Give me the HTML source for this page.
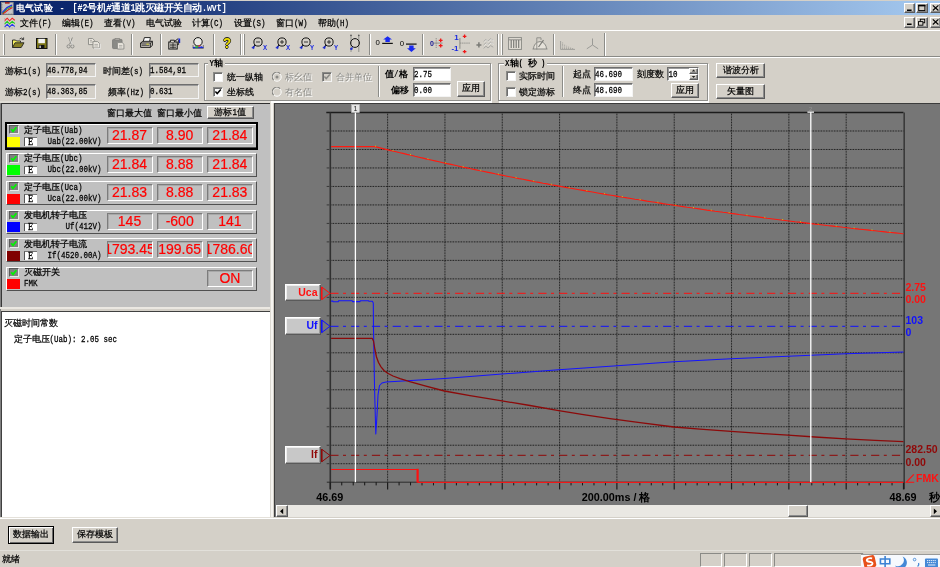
<!DOCTYPE html>
<html><head><meta charset="utf-8"><title>UI</title><style>
*{box-sizing:border-box;margin:0;padding:0}
html,body{width:940px;height:567px;overflow:hidden;background:#d4d0c8}
body{position:relative;font-family:"Liberation Sans",sans-serif;font-size:9px;color:#000;line-height:1}
#root{position:absolute;left:0;top:0;width:940px;height:567px;overflow:hidden;will-change:transform}
.a{position:absolute}
.t{position:absolute;white-space:nowrap;-webkit-text-stroke-width:0.22px;font-size:9px;line-height:12px;height:12px}
.m{font-family:"Liberation Mono",monospace;font-size:7.5px;letter-spacing:0px;display:inline-block;transform:scaleY(1.28);transform-origin:50% 62%}
.t.m{display:block}
.b{font-weight:bold;-webkit-text-stroke-width:0 !important}
i{display:inline-block;width:1em;font-style:normal;text-align:center}
.g{-webkit-text-stroke-width:0;color:#8a8a86;text-shadow:0.7px 0.7px 0 #fff}
.sunk{position:absolute;border:1px solid;border-color:#808080 #fff #fff #808080;}
.sunk2{position:absolute;border:1px solid;border-color:#6e6e6e #f4f4f4 #f4f4f4 #6e6e6e;box-shadow:inset 1px 1px 0 #9a9a9a}
.btn{-webkit-text-stroke-width:0.22px;position:absolute;border:1px solid;border-color:#fff #5a5a5a #5a5a5a #fff;background:#d4d0c8;box-shadow:inset -1px -1px 0 #8c8c8c;text-align:center;font-size:9px;white-space:nowrap}
.grp{position:absolute;border:1px solid #8f8f8c;box-shadow:1px 1px 0 #fff, inset 1px 1px 0 #fff}
.cb{position:absolute;width:10px;height:10px;background:#fff;border:1px solid;border-color:#8a8a86 #f4f4f4 #f4f4f4 #8a8a86;box-shadow:inset 1px 1px 0 #6e6e6e}
.val{position:absolute;width:46px;height:17px;border:1px solid;border-color:#7c7c7c #fff #fff #7c7c7c;box-shadow:inset 1px 1px 0 #a8a8a8;color:#f00;-webkit-text-stroke:0.2px #f00;font-size:14px;line-height:15px;display:flex;justify-content:center;overflow:hidden;white-space:nowrap}
.row{position:absolute;left:6px;width:251px;height:24px;border:1px solid;border-color:#fff #505050 #505050 #fff;background:#c0c0c0}
.vsep{position:absolute;width:2px;border-left:1px solid #8c8c88;border-right:1px solid #fff}
</style></head><body>
<div id="root">
<div class="a" style="left:0;top:1px;width:940px;height:14px;background:linear-gradient(90deg,#0a246a 0%,#0c276d 8%,#a6caf0 100%)"></div>
<svg class="a" style="left:1.4px;top:1.8px" width="12.6" height="12.8" viewBox="0 0 12.6 12.8"><rect x="0.4" y="0.4" width="11.8" height="12" fill="#c4c4c4" stroke="#8a8a8a" stroke-width="0.8"/><rect x="4" y="0.2" width="4.6" height="1.4" fill="#a01010"/><path d="M1.2 10.6 L6 5.6 L11 3.2" stroke="#2030e0" stroke-width="1.3" fill="none"/><path d="M1.4 11.6 L6.4 6.8 L11.2 4.4" stroke="#20b020" stroke-width="1" fill="none"/><path d="M1.8 12 L7 8 L11.4 5.4" stroke="#e02020" stroke-width="1.2" fill="none"/><path d="M1 2 V12 H12" stroke="#555" stroke-width="0.6" stroke-dasharray="0.8 0.8" fill="none"/></svg>
<div class="t b" style="left:15.5px;top:2px;color:#fff;font-size:9.4px"><i>电</i><i>气</i><i>试</i><i>验</i></div>
<div class="t b" style="left:60.5px;top:2px;color:#fff;font-size:9.4px">-</div>
<div class="t b" style="left:72.5px;top:2px;color:#fff;font-size:9.5px"><span class="m b" style="font-size:8.3px">[#2</span><i>号</i><i>机</i><span class="m b" style="font-size:8.3px">#</span><i>通</i><i>道</i><span class="m b" style="font-size:8.3px">1</span><i>跳</i><i>灭</i><i>磁</i><i>开</i><i>关</i><i>自</i><i>动</i><span class="m b" style="font-size:8.3px">.wvt]</span></div>
<div class="btn" style="left:904px;top:3px;width:11px;height:10.3px"></div><svg class="a" style="left:904px;top:3px" width="11" height="10.3" viewBox="0 0 11 10.3"><rect x="3" y="6.5" width="4.6" height="1.5" fill="#000"/></svg>
<div class="btn" style="left:916px;top:3px;width:11.8px;height:10.3px"></div><svg class="a" style="left:916px;top:3px" width="11.8" height="10.3" viewBox="0 0 11.8 10.3"><rect x="2.7" y="2.3" width="6.2" height="5.3" fill="none" stroke="#000" stroke-width="1"/><rect x="2.2" y="1.8" width="7.2" height="1.6" fill="#000"/></svg>
<div class="btn" style="left:930px;top:3px;width:11px;height:10.3px"></div><svg class="a" style="left:930px;top:3px" width="11" height="10.3" viewBox="0 0 11 10.3"><path d="M2.8 2.4 L8.4 7.5 M8.4 2.4 L2.8 7.5" stroke="#000" stroke-width="1.15" fill="none"/></svg>
<div class="btn" style="left:904px;top:17.4px;width:11px;height:10.3px"></div><svg class="a" style="left:904px;top:17.4px" width="11" height="10.3" viewBox="0 0 11 10.3"><rect x="3" y="6.5" width="4.6" height="1.5" fill="#000"/></svg>
<div class="btn" style="left:916px;top:17.4px;width:11.8px;height:10.3px"></div><svg class="a" style="left:916px;top:17.4px" width="11.8" height="10.3" viewBox="0 0 11.8 10.3"><rect x="4.3" y="2.2" width="4.4" height="3.6" fill="none" stroke="#000" stroke-width="0.9"/><rect x="2.5" y="4.6" width="4.4" height="3.6" fill="#d4d0c8" stroke="#000" stroke-width="0.9"/></svg>
<div class="btn" style="left:930px;top:17.4px;width:11px;height:10.3px"></div><svg class="a" style="left:930px;top:17.4px" width="11" height="10.3" viewBox="0 0 11 10.3"><path d="M2.8 2.4 L8.4 7.5 M8.4 2.4 L2.8 7.5" stroke="#000" stroke-width="1.15" fill="none"/></svg>
<svg class="a" style="left:4px;top:16.6px" width="11.4" height="12" viewBox="0 0 11.4 12"><path d="M0.8 1 V11 H10.4" stroke="#8a8a86" stroke-width="0.7" stroke-dasharray="0.7 0.9" fill="none"/><path d="M0.8 3.6 L3.2 1.2 L5.6 3.8 L8.2 1.2 L10.8 3.4" stroke="#f02020" fill="none" stroke-width="1.1"/><path d="M0.8 6.8 L3.2 4.4 L5.6 7 L8.2 4.4 L10.8 6.6" stroke="#20d020" fill="none" stroke-width="1.1"/><path d="M0.8 9.8 L3.2 7.4 L5.6 10 L8.2 7.4 L10.8 9.6" stroke="#2838f0" fill="none" stroke-width="1.1"/></svg>
<div class="t" style="left:20px;top:17px"><i>文</i><i>件</i><span class="m">(F)</span></div>
<div class="t" style="left:62px;top:17px"><i>编</i><i>辑</i><span class="m">(E)</span></div>
<div class="t" style="left:104px;top:17px"><i>查</i><i>看</i><span class="m">(V)</span></div>
<div class="t" style="left:146px;top:17px"><i>电</i><i>气</i><i>试</i><i>验</i></div>
<div class="t" style="left:191.5px;top:17px"><i>计</i><i>算</i><span class="m">(C)</span></div>
<div class="t" style="left:234px;top:17px"><i>设</i><i>置</i><span class="m">(S)</span></div>
<div class="t" style="left:276px;top:17px"><i>窗</i><i>口</i><span class="m">(W)</span></div>
<div class="t" style="left:317.5px;top:17px"><i>帮</i><i>助</i><span class="m">(H)</span></div>
<div class="a" style="left:0;top:30px;width:940px;height:1px;background:#fff"></div>
<div class="a" style="left:0;top:56px;width:940px;height:1px;background:#8a8a86"></div>
<div class="a" style="left:0;top:57px;width:940px;height:1px;background:#fff"></div>
<div class="a" style="left:2.5px;top:33.5px;width:2px;height:21.5px;border-left:1px solid #fff;border-right:1px solid #8c8c88"></div>
<div class="vsep" style="left:54.8px;top:34px;height:21px"></div>
<div class="vsep" style="left:130.6px;top:34px;height:21px"></div>
<div class="vsep" style="left:159.8px;top:34px;height:21px"></div>
<div class="vsep" style="left:212.8px;top:34px;height:21px"></div>
<div class="vsep" style="left:239.5px;top:34px;height:21px"></div>
<div class="a" style="left:243.3px;top:33.5px;width:2px;height:21.5px;border-left:1px solid #fff;border-right:1px solid #8c8c88"></div>
<div class="vsep" style="left:368.8px;top:34px;height:21px"></div>
<div class="vsep" style="left:421.5px;top:34px;height:21px"></div>
<div class="vsep" style="left:497px;top:34px;height:21px"></div>
<div class="a" style="left:500.5px;top:33.5px;width:2px;height:21.5px;border-left:1px solid #fff;border-right:1px solid #8c8c88"></div>
<div class="vsep" style="left:553px;top:34px;height:21px"></div>
<div class="vsep" style="left:604px;top:33px;height:23px"></div>
<svg class="a" style="left:11.5px;top:37.25px;overflow:visible" width="13" height="11.5" viewBox="0 0 13 11.5"><path d="M0.5 10.5 V3 H3.5 L4.5 4 H8.5 V5.5" fill="#f4f060" stroke="#222" stroke-width="0.9"/><path d="M0.6 10.5 L3 5.8 H12 L9.2 10.5 Z" fill="#8a8226" stroke="#222" stroke-width="0.9"/><path d="M7.6 2 Q9.6 0 11.3 2.2 M11.6 0.4 V2.6 H9.6" stroke="#222" stroke-width="0.8" fill="none"/></svg>
<svg class="a" style="left:35.65px;top:37.7px;overflow:visible" width="11.5" height="11" viewBox="0 0 11.5 11"><rect x="0.5" y="0.5" width="10.5" height="10" fill="#7c7618" stroke="#111" stroke-width="1"/><rect x="2.3" y="0.8" width="6.6" height="4.4" fill="#f2f2f2"/><rect x="2.8" y="7" width="5.6" height="3.4" fill="#111"/><rect x="3.4" y="7.6" width="1.4" height="2.4" fill="#ddd"/></svg>
<svg class="a" style="left:65.5px;top:37px;overflow:visible" width="9" height="12" viewBox="0 0 9 12"><path d="M2.6 0.5 L5.4 7.2 M6.4 0.5 L3.6 7.2" stroke="#8a8a86" stroke-width="1" fill="none"/><circle cx="2.6" cy="9.4" r="1.6" fill="none" stroke="#8a8a86" stroke-width="1"/><circle cx="6.4" cy="9.4" r="1.6" fill="none" stroke="#8a8a86" stroke-width="1"/><path d="M3.6 1.5 L6.4 8.2" stroke="#fff" stroke-width="0.5" fill="none"/></svg>
<svg class="a" style="left:88.1px;top:37.75px;overflow:visible" width="12.4" height="10.5" viewBox="0 0 12.4 10.5"><path d="M0.5 0.5 H4.6 L6.4 2.3 V6.6 H0.5 Z" fill="#e8e4dc" stroke="#8a8a86" stroke-width="0.9"/><path d="M2 2.4 H4 M2 4 H5" stroke="#8a8a86" stroke-width="0.6"/><path d="M5 3.6 H9.6 L11.6 5.6 V10 H5 Z" fill="#ece8e0" stroke="#8a8a86" stroke-width="0.9"/><path d="M6.4 6.4 H10 M6.4 8 H10" stroke="#8a8a86" stroke-width="0.6"/><path d="M6 10.6 H12.2 V5.8" stroke="#fff" stroke-width="0.6" fill="none"/></svg>
<svg class="a" style="left:112.25px;top:37.65px;overflow:visible" width="12.5" height="11.5" viewBox="0 0 12.5 11.5"><rect x="0.6" y="1.4" width="9.4" height="9.2" rx="0.8" fill="#8a8a86" stroke="#7c7c78" stroke-width="0.9"/><rect x="3" y="0.4" width="4.6" height="2" fill="#a8a4a0" stroke="#7c7c78" stroke-width="0.6"/><path d="M5.4 4.6 H10.2 L11.9 6.2 V11 H5.4 Z" fill="#ece8e0" stroke="#8a8a86" stroke-width="0.9"/><path d="M7 7.4 H10.4 M7 9 H10.4" stroke="#8a8a86" stroke-width="0.6"/></svg>
<svg class="a" style="left:139.9px;top:37.25px;overflow:visible" width="13" height="11.5" viewBox="0 0 13 11.5"><path d="M3.2 4.5 L4.4 0.6 H10.4 L9.6 4.5" fill="#fff" stroke="#111" stroke-width="0.9"/><path d="M0.6 6 L2.8 4.3 H12.4 V8.2 L10.4 10.4 H0.6 Z" fill="#c8c4bc" stroke="#111" stroke-width="0.9"/><path d="M0.6 6 H10.4 V10.4 M10.4 6 L12.4 4.3" fill="none" stroke="#111" stroke-width="0.8"/><path d="M1.6 8.1 H9.4" stroke="#111" stroke-width="0.9"/><rect x="6.4" y="6.7" width="2.4" height="0.9" fill="#ee3"/></svg>
<svg class="a" style="left:168.2px;top:37.85px;overflow:visible" width="13" height="11.5" viewBox="0 0 13 11.5"><rect x="0.8" y="4" width="8.4" height="7" fill="#e0dcd4" stroke="#111" stroke-width="1"/><path d="M2.4 4 V2.2 H6.4 V4" fill="#d4d0c8" stroke="#111" stroke-width="0.9"/><path d="M2 6.2 H8 M2 7.8 H8 M2 9.4 H8 M5 5 V10.6" stroke="#111" stroke-width="0.7"/><path d="M6.6 3.4 L10.2 0.6" stroke="#111" stroke-width="0.9"/><path d="M10.2 0.4 L12.2 0.4 L12.2 5 L11 5 Z" fill="#1a2ad8"/><path d="M10.6 2.2 V6.6 H9.2" stroke="#111" stroke-width="0.8" fill="none"/></svg>
<svg class="a" style="left:192.4px;top:37.4px;overflow:visible" width="12" height="12" viewBox="0 0 12 12"><circle cx="6" cy="4.8" r="4.2" fill="#ecebe6" stroke="#111" stroke-width="1"/><path d="M1 8 V11.4 H11.4 V8" fill="none" stroke="#555" stroke-width="0.7"/><path d="M1 10.6 H11.4" stroke="#1a2ad8" stroke-width="1.1"/><path d="M2.2 9.6 L0.6 10.6 L2.2 11.6 Z" fill="#1a2ad8"/><path d="M3.2 10 H6.2" stroke="#20c020" stroke-width="1.4"/><path d="M6.6 9.4 L8.2 8.2" stroke="#e02020" stroke-width="1.2"/><path d="M8.4 10 H10.4" stroke="#1a2ad8" stroke-width="1.4"/></svg>
<div class="a b" style="left:223.2px;top:35.2px;font-size:14.5px;line-height:16px;color:#f0e000;text-shadow:0.7px 0 0 #222,-0.7px 0 0 #222,0 0.7px 0 #222,0 -0.7px 0 #222;transform:scaleX(0.92);transform-origin:0 0">?</div>
<svg class="a" style="left:258.2px;top:41.7px;overflow:visible" width="1" height="1" viewBox="0 0 1 1"><circle cx="0" cy="0" r="4.1" fill="none" stroke="#111" stroke-width="1"/><path d="M-2.8 2.9 L-4.6 5" stroke="#111" stroke-width="1.1"/><path d="M-6.2 5.6 L-3.6 4.2 L-4.2 6.8 Z" fill="#1a2ad0" stroke="#1a2ad0" stroke-width="0.7" stroke-linejoin="round"/><path d="M-2 0 H2" stroke="#111" stroke-width="0.8"/></svg><div class="a b" style="left:262.5px;top:44px;font-size:7.5px;line-height:7px;color:#1a2ae0;transform:scaleX(0.82);transform-origin:0 0">X</div>
<svg class="a" style="left:281.8px;top:41.7px;overflow:visible" width="1" height="1" viewBox="0 0 1 1"><circle cx="0" cy="0" r="4.1" fill="none" stroke="#111" stroke-width="1"/><path d="M-2.8 2.9 L-4.6 5" stroke="#111" stroke-width="1.1"/><path d="M-6.2 5.6 L-3.6 4.2 L-4.2 6.8 Z" fill="#1a2ad0" stroke="#1a2ad0" stroke-width="0.7" stroke-linejoin="round"/><path d="M-2 0 H2" stroke="#111" stroke-width="0.8"/><path d="M0 -2 V2" stroke="#111" stroke-width="0.8"/></svg><div class="a b" style="left:286.1px;top:44px;font-size:7.5px;line-height:7px;color:#1a2ae0;transform:scaleX(0.82);transform-origin:0 0">X</div>
<svg class="a" style="left:305.5px;top:41.7px;overflow:visible" width="1" height="1" viewBox="0 0 1 1"><circle cx="0" cy="0" r="4.1" fill="none" stroke="#111" stroke-width="1"/><path d="M-2.8 2.9 L-4.6 5" stroke="#111" stroke-width="1.1"/><path d="M-6.2 5.6 L-3.6 4.2 L-4.2 6.8 Z" fill="#1a2ad0" stroke="#1a2ad0" stroke-width="0.7" stroke-linejoin="round"/><path d="M-2 0 H2" stroke="#111" stroke-width="0.8"/></svg><div class="a b" style="left:309.8px;top:44px;font-size:7.5px;line-height:7px;color:#1a2ae0;transform:scaleX(0.82);transform-origin:0 0">Y</div>
<svg class="a" style="left:329.4px;top:41.7px;overflow:visible" width="1" height="1" viewBox="0 0 1 1"><circle cx="0" cy="0" r="4.1" fill="none" stroke="#111" stroke-width="1"/><path d="M-2.8 2.9 L-4.6 5" stroke="#111" stroke-width="1.1"/><path d="M-6.2 5.6 L-3.6 4.2 L-4.2 6.8 Z" fill="#1a2ad0" stroke="#1a2ad0" stroke-width="0.7" stroke-linejoin="round"/><path d="M-2 0 H2" stroke="#111" stroke-width="0.8"/><path d="M0 -2 V2" stroke="#111" stroke-width="0.8"/></svg><div class="a b" style="left:333.7px;top:44px;font-size:7.5px;line-height:7px;color:#1a2ae0;transform:scaleX(0.82);transform-origin:0 0">Y</div>
<svg class="a" style="left:355px;top:42.7px;overflow:visible" width="1" height="1" viewBox="0 0 1 1"><path d="M-4 -8 V9 M3.8 -8 V9" stroke="#8a8a86" stroke-width="0.9"/><circle cx="0" cy="0" r="4.4" fill="none" stroke="#111" stroke-width="1"/><path d="M-5 6 L-2.6 4.4 L-3 6.8 Z" fill="#1a2ad0" stroke="#1a2ad0" stroke-width="0.7" stroke-linejoin="round"/><circle cx="-4" cy="-7.6" r="0.8" fill="#555"/><circle cx="3.8" cy="-7.6" r="0.8" fill="#555"/></svg>
<svg class="a" style="left:0;top:30px" width="940" height="28" viewBox="0 30 940 28">
<path d="M387.6 36.2 L392 39.6 H389.8 V41.9 H385.4 V39.6 H383.2 Z" fill="#1a2af0"/><rect x="382.2" y="42.8" width="10.6" height="1.2" fill="#111"/>
<rect x="406" y="43.5" width="10.6" height="1.2" fill="#111"/><path d="M411.4 52 L415.8 48.2 H413.6 V45.6 H409.2 V48.2 H407 Z" fill="#1a2af0"/>
<path d="M436.2 38 V48" stroke="#8a8a86" stroke-width="0.9" stroke-dasharray="1.4 0.8"/><path d="M434 43.1 H442.6" stroke="#8a8a86" stroke-width="0.9"/>
<path d="M438.8 40.4 H442.6 M440.7 38.6 V42.2 M438.8 45.7 H442.6 M440.7 43.9 V47.5" stroke="#f01818" stroke-width="1.3"/>
<path d="M459.9 38 V48.8" stroke="#8a8a86" stroke-width="1"/><path d="M460 43.1 H470" stroke="#8a8a86" stroke-width="0.9" stroke-dasharray="1.4 0.7"/>
<path d="M462.8 36.3 H466.4 M464.6 34.6 V38 M462.8 51.6 H466.4 M464.6 49.9 V53.3" stroke="#f01818" stroke-width="1.3"/>
<path d="M476.4 44.9 H481.4 M478.9 42.3 V47.5" stroke="#7a7a76" stroke-width="1.5"/>
<path d="M483.6 41.6 L486 39.4 L488 41.2 L490.6 38.8 L493.2 40.4 M483.6 45 L486 42.8 L488 44.6 L490.6 42.2 L493.2 43.8 M483.6 48.4 L486 46.2 L488 48 L490.6 45.6 L493.2 47.2" stroke="#a4a4a0" stroke-width="0.9" fill="none"/>
<path d="M484.2 42.2 L486.6 40 L488.6 41.8 L491.2 39.4 L493.8 41 M484.2 45.6 L486.6 43.4 L488.6 45.2 L491.2 42.8 L493.8 44.4" stroke="#fff" stroke-width="0.5" fill="none"/>
</svg>
<div class="a" style="left:375.6px;top:39.2px;font-size:7.8px;line-height:8px">0</div>
<div class="a" style="left:399.8px;top:40.4px;font-size:7.8px;line-height:8px">0</div>
<div class="a b" style="left:430px;top:39.6px;font-size:7px;line-height:8px;color:#101090">0</div>
<div class="a b" style="left:454.2px;top:34px;font-size:8px;line-height:8px;color:#1a2ae0">1</div>
<div class="a b" style="left:451.4px;top:45.4px;font-size:8px;line-height:8px;color:#1a2ae0">-1</div>
<svg class="a" style="left:507.6px;top:37px;overflow:visible" width="14" height="13" viewBox="0 0 14 13"><rect x="0.6" y="0.6" width="12.8" height="11.8" fill="#e6e2da" stroke="#8a8a86" stroke-width="1"/><path d="M0.6 2.8 H13.4" stroke="#8a8a86" stroke-width="1"/><path d="M3.2 3 V11 M5.7 3 V11 M8.2 3 V11 M10.7 3 V11" stroke="#7a7a76" stroke-width="1.2"/></svg>
<svg class="a" style="left:531.6px;top:37px;overflow:visible" width="16" height="13" viewBox="0 0 16 13"><path d="M0.5 12 H15.5 M1.5 12 A6.5 7.4 0 0 1 14.5 12" fill="#e6e2da" stroke="#8a8a86" stroke-width="1"/><path d="M4.8 12.5 V0.8 H9 V3" fill="none" stroke="#8a8a86" stroke-width="0.9"/><path d="M6.5 10 L11.5 3.2" stroke="#7a7a76" stroke-width="1.2"/></svg>
<svg class="a" style="left:559.5px;top:41px;overflow:visible" width="15" height="9" viewBox="0 0 15 9"><path d="M0.6 0 V8.4 H15" fill="none" stroke="#9a9a96" stroke-width="0.9"/><path d="M2.6 8 V1.5 M4.6 8 V3.5 M6.6 8 V4.8 M8.6 8 V5.6 M10.6 8 V6.2 M12.6 8 V6.6" stroke="#9a9a96" stroke-width="0.9" stroke-dasharray="0.9 0.5"/></svg>
<svg class="a" style="left:586px;top:37.5px;overflow:visible" width="13" height="12" viewBox="0 0 13 12"><path d="M6.5 0.5 V7 L0.8 10.8 M6.5 7 L12.2 10.8" fill="none" stroke="#9a9a96" stroke-width="1"/></svg>
<div class="t" style="left:5px;top:65px"><i>游</i><i>标</i><span class="m">1(s)</span></div>
<div class="sunk2" style="left:45.5px;top:62.5px;width:50px;height:14.5px;background:#d4d0c8"><div class="t m" style="left:0.6px;top:2.2px;line-height:11.5px;height:11.5px">46.778,94</div></div>
<div class="t" style="left:102.5px;top:65px"><i>时</i><i>间</i><i>差</i><span class="m">(s)</span></div>
<div class="sunk2" style="left:148.5px;top:62.5px;width:50px;height:14.5px;background:#d4d0c8"><div class="t m" style="left:0.6px;top:2.2px;line-height:11.5px;height:11.5px">1.584,91</div></div>
<div class="t" style="left:5px;top:86px"><i>游</i><i>标</i><span class="m">2(s)</span></div>
<div class="sunk2" style="left:45.5px;top:84px;width:50px;height:14.5px;background:#d4d0c8"><div class="t m" style="left:0.6px;top:2.2px;line-height:11.5px;height:11.5px">48.363,85</div></div>
<div class="t" style="left:108px;top:86px"><i>频</i><i>率</i><span class="m">(Hz)</span></div>
<div class="sunk2" style="left:148.5px;top:84px;width:50px;height:14.5px;background:#d4d0c8"><div class="t m" style="left:0.6px;top:2.2px;line-height:11.5px;height:11.5px">0.631</div></div>
<div class="grp" style="left:203.5px;top:62.6px;width:287.2px;height:38px"></div>
<div class="t b" style="left:208px;top:57.6px;line-height:10px;height:10px;background:#d4d0c8;padding:0 1.5px"><span class="m b">Y</span><i>轴</i></div>
<div class="grp" style="left:498px;top:62.6px;width:210.2px;height:38px"></div>
<div class="t b" style="left:503.5px;top:57.6px;line-height:10px;height:10px;background:#d4d0c8;padding:0 1.5px"><span class="m b">X</span><i>轴</i><span class="m b">(&nbsp;</span><i>秒</i><span class="m b">&nbsp;)</span></div>
<div class="cb" style="left:213px;top:72px;background:#fff"></div>
<div class="t" style="left:227px;top:71px"><i>统</i><i>一</i><i>纵</i><i>轴</i></div>
<div class="cb" style="left:213px;top:86.5px;background:#fff"><svg class="a" style="left:0;top:0" width="8" height="8" viewBox="0 0 8 8"><path d="M1.4 3.6 L3.2 5.6 L6.8 1.6" stroke="#000" stroke-width="1.5" fill="none"/></svg></div>
<div class="t" style="left:227px;top:85.5px"><i>坐</i><i>标</i><i>线</i></div>
<svg class="a" style="left:271.5px;top:72px" width="10" height="10" viewBox="0 0 10 10"><circle cx="5" cy="5" r="4.2" fill="#d4d0c8" stroke="#fff" stroke-width="1"/><path d="M1.6 8 A4.4 4.4 0 0 1 8 1.6" fill="none" stroke="#7c7c78" stroke-width="1.1"/><circle cx="5" cy="5" r="1.5" fill="#8a8a86"/></svg>
<div class="t g" style="left:285px;top:71px"><i>标</i><i>幺</i><i>值</i></div>
<svg class="a" style="left:271.5px;top:86.5px" width="10" height="10" viewBox="0 0 10 10"><circle cx="5" cy="5" r="4.2" fill="#d4d0c8" stroke="#fff" stroke-width="1"/><path d="M1.6 8 A4.4 4.4 0 0 1 8 1.6" fill="none" stroke="#7c7c78" stroke-width="1.1"/></svg>
<div class="t g" style="left:285px;top:85.5px"><i>有</i><i>名</i><i>值</i></div>
<div class="cb" style="left:322px;top:72px;background:#d4d0c8"><svg class="a" style="left:0;top:0" width="8" height="8" viewBox="0 0 8 8"><path d="M1.4 3.6 L3.2 5.6 L6.8 1.6" stroke="#8a8a86" stroke-width="1.5" fill="none"/></svg></div>
<div class="t g" style="left:336px;top:71px"><i>合</i><i>并</i><i>单</i><i>位</i></div>
<div class="vsep" style="left:377.5px;top:66px;height:31px"></div>
<div class="t b" style="left:385px;top:67.5px"><i>值</i><span class="m b">/</span><i>格</i></div>
<div class="sunk2" style="left:412.5px;top:66.5px;width:38.5px;height:14px;background:#fff"><div class="t m" style="left:0.6px;top:2.2px;line-height:11px;height:11px">2.75</div></div>
<div class="t b" style="left:390.5px;top:84px"><i>偏</i><i>移</i></div>
<div class="sunk2" style="left:412.5px;top:83px;width:38.5px;height:14px;background:#fff"><div class="t m" style="left:0.6px;top:2.2px;line-height:11px;height:11px">0.00</div></div>
<div class="btn" style="left:457px;top:81px;width:28px;height:15.5px;line-height:12.5px"><i>应</i><i>用</i></div>
<div class="cb" style="left:505.5px;top:70.5px;background:#fff"></div>
<div class="t" style="left:519px;top:69.5px"><i>实</i><i>际</i><i>时</i><i>间</i></div>
<div class="cb" style="left:505.5px;top:86.5px;background:#fff"></div>
<div class="t" style="left:519px;top:85.5px"><i>锁</i><i>定</i><i>游</i><i>标</i></div>
<div class="vsep" style="left:561.5px;top:66px;height:31px"></div>
<div class="t" style="left:572.5px;top:67.5px"><i>起</i><i>点</i></div>
<div class="sunk2" style="left:593.5px;top:66.5px;width:39px;height:14px;background:#fff"><div class="t m" style="left:0.6px;top:2.2px;line-height:11px;height:11px">46.690</div></div>
<div class="t" style="left:572.5px;top:83.5px"><i>终</i><i>点</i></div>
<div class="sunk2" style="left:593.5px;top:83px;width:39px;height:14px;background:#fff"><div class="t m" style="left:0.6px;top:2.2px;line-height:11px;height:11px">48.690</div></div>
<div class="t" style="left:637px;top:67.5px"><i>刻</i><i>度</i><i>数</i></div>
<div class="sunk2" style="left:667px;top:66.5px;width:32px;height:14px;background:#fff"><div class="t m" style="left:0.6px;top:2.2px;line-height:11px;height:11px">10</div></div>
<div class="btn" style="left:688.5px;top:67.5px;width:9.5px;height:6px"></div><div class="btn" style="left:688.5px;top:73.5px;width:9.5px;height:6px"></div>
<svg class="a" style="left:688.5px;top:67.5px" width="9.5" height="12" viewBox="0 0 9.5 12"><path d="M4.6 1.6 L6.4 3.6 H2.8 Z M4.6 10 L6.4 8 H2.8 Z" fill="#222"/></svg>
<div class="btn" style="left:670.5px;top:82.5px;width:28px;height:15.5px;line-height:12.5px"><i>应</i><i>用</i></div>
<div class="btn" style="left:716px;top:62.5px;width:49px;height:15px;line-height:12px"><i>谐</i><i>波</i><i>分</i><i>析</i></div>
<div class="btn" style="left:716px;top:83.5px;width:49px;height:15px;line-height:12px"><i>矢</i><i>量</i><i>图</i></div>
<div class="a" style="left:0;top:100.8px;width:271px;height:2px;background:#e0ddd6"></div>
<div class="a" style="left:271px;top:100.7px;width:220.8px;height:2px;background:#fff"></div>
<div class="a" style="left:498.5px;top:100.7px;width:210.5px;height:2px;background:#fff"></div>
<div class="a" style="left:0;top:102.9px;width:270.1px;height:203.8px;background:#c0c0c0"></div>
<div class="a" style="left:0;top:102.9px;width:270.1px;height:1.2px;background:#303030"></div>
<div class="a" style="left:0;top:102.9px;width:1px;height:415px;background:#808080"></div>
<div class="a" style="left:1px;top:102.9px;width:1px;height:203.8px;background:#383838"></div>
<div class="a" style="left:0;top:306.7px;width:272.6px;height:2.3px;background:#ebe8e2"></div>
<div class="a" style="left:270.1px;top:102.9px;width:1px;height:415px;background:#dcd9d2"></div>
<div class="a" style="left:271px;top:102.9px;width:1.6px;height:415px;background:#f6f4f0"></div>
<div class="t" style="left:106.5px;top:107px"><i>窗</i><i>口</i><i>最</i><i>大</i><i>值</i></div>
<div class="t" style="left:156.5px;top:107px"><i>窗</i><i>口</i><i>最</i><i>小</i><i>值</i></div>
<div class="btn" style="left:207px;top:106px;width:46.5px;height:12.5px;line-height:10px"><i>游</i><i>标</i><span class="m">1</span><i>值</i></div>
<div class="row" style="top:124px"></div>
<div class="a" style="left:4.5px;top:122px;width:253.5px;height:27.5px;border:2px solid #000"></div>
<div class="a" style="left:9px;top:125px;width:9.5px;height:9px;background:#808080;border:1px solid;border-color:#5a5a5a #e8e8e8 #e8e8e8 #5a5a5a"><svg class="a" style="left:0;top:0" width="7.5" height="7" viewBox="0 0 7.5 7"><path d="M1.2 3.2 L3 5.4 L6.4 1.2" stroke="#00f400" stroke-width="1.7" fill="none"/></svg></div>
<div class="a" style="left:7px;top:136.5px;width:12.5px;height:10px;background:#ffff00"></div>
<div class="t" style="left:24px;top:123.5px"><i>定</i><i>子</i><i>电</i><i>压</i><span class="m">(Uab)</span></div>
<div class="a" style="left:24px;top:137px;width:12.5px;height:8.5px;background:#fff;border-left:1.3px solid #555;border-top:1px solid #777"></div>
<div class="t m" style="left:28px;top:135.5px;font-family:'Liberation Serif',serif;font-size:8.5px">E</div>
<div class="t m" style="right:838.5px;top:135.5px">Uab(22.00kV)</div>
<div class="val" style="left:106.5px;top:127px">21.87</div>
<div class="val" style="left:156.7px;top:127px">8.90</div>
<div class="val" style="left:206.9px;top:127px">21.84</div>
<div class="row" style="top:152.5px"></div>
<div class="a" style="left:9px;top:153.5px;width:9.5px;height:9px;background:#808080;border:1px solid;border-color:#5a5a5a #e8e8e8 #e8e8e8 #5a5a5a"><svg class="a" style="left:0;top:0" width="7.5" height="7" viewBox="0 0 7.5 7"><path d="M1.2 3.2 L3 5.4 L6.4 1.2" stroke="#00f400" stroke-width="1.7" fill="none"/></svg></div>
<div class="a" style="left:7px;top:165px;width:12.5px;height:10px;background:#00ff00"></div>
<div class="t" style="left:24px;top:152px"><i>定</i><i>子</i><i>电</i><i>压</i><span class="m">(Ubc)</span></div>
<div class="a" style="left:24px;top:165.5px;width:12.5px;height:8.5px;background:#fff;border-left:1.3px solid #555;border-top:1px solid #777"></div>
<div class="t m" style="left:28px;top:164px;font-family:'Liberation Serif',serif;font-size:8.5px">E</div>
<div class="t m" style="right:838.5px;top:164px">Ubc(22.00kV)</div>
<div class="val" style="left:106.5px;top:155.5px">21.84</div>
<div class="val" style="left:156.7px;top:155.5px">8.88</div>
<div class="val" style="left:206.9px;top:155.5px">21.84</div>
<div class="row" style="top:181px"></div>
<div class="a" style="left:9px;top:182px;width:9.5px;height:9px;background:#808080;border:1px solid;border-color:#5a5a5a #e8e8e8 #e8e8e8 #5a5a5a"><svg class="a" style="left:0;top:0" width="7.5" height="7" viewBox="0 0 7.5 7"><path d="M1.2 3.2 L3 5.4 L6.4 1.2" stroke="#00f400" stroke-width="1.7" fill="none"/></svg></div>
<div class="a" style="left:7px;top:193.5px;width:12.5px;height:10px;background:#ff0000"></div>
<div class="t" style="left:24px;top:180.5px"><i>定</i><i>子</i><i>电</i><i>压</i><span class="m">(Uca)</span></div>
<div class="a" style="left:24px;top:194px;width:12.5px;height:8.5px;background:#fff;border-left:1.3px solid #555;border-top:1px solid #777"></div>
<div class="t m" style="left:28px;top:192.5px;font-family:'Liberation Serif',serif;font-size:8.5px">E</div>
<div class="t m" style="right:838.5px;top:192.5px">Uca(22.00kV)</div>
<div class="val" style="left:106.5px;top:184px">21.83</div>
<div class="val" style="left:156.7px;top:184px">8.88</div>
<div class="val" style="left:206.9px;top:184px">21.83</div>
<div class="row" style="top:209.5px"></div>
<div class="a" style="left:9px;top:210.5px;width:9.5px;height:9px;background:#808080;border:1px solid;border-color:#5a5a5a #e8e8e8 #e8e8e8 #5a5a5a"><svg class="a" style="left:0;top:0" width="7.5" height="7" viewBox="0 0 7.5 7"><path d="M1.2 3.2 L3 5.4 L6.4 1.2" stroke="#00f400" stroke-width="1.7" fill="none"/></svg></div>
<div class="a" style="left:7px;top:222px;width:12.5px;height:10px;background:#0000ff"></div>
<div class="t" style="left:24px;top:209px"><i>发</i><i>电</i><i>机</i><i>转</i><i>子</i><i>电</i><i>压</i></div>
<div class="a" style="left:24px;top:222.5px;width:12.5px;height:8.5px;background:#fff;border-left:1.3px solid #555;border-top:1px solid #777"></div>
<div class="t m" style="left:28px;top:221px;font-family:'Liberation Serif',serif;font-size:8.5px">E</div>
<div class="t m" style="right:838.5px;top:221px">Uf(412V)</div>
<div class="val" style="left:106.5px;top:212.5px">145</div>
<div class="val" style="left:156.7px;top:212.5px">-600</div>
<div class="val" style="left:206.9px;top:212.5px">141</div>
<div class="row" style="top:238px"></div>
<div class="a" style="left:9px;top:239px;width:9.5px;height:9px;background:#808080;border:1px solid;border-color:#5a5a5a #e8e8e8 #e8e8e8 #5a5a5a"><svg class="a" style="left:0;top:0" width="7.5" height="7" viewBox="0 0 7.5 7"><path d="M1.2 3.2 L3 5.4 L6.4 1.2" stroke="#00f400" stroke-width="1.7" fill="none"/></svg></div>
<div class="a" style="left:7px;top:250.5px;width:12.5px;height:10px;background:#800000"></div>
<div class="t" style="left:24px;top:237.5px"><i>发</i><i>电</i><i>机</i><i>转</i><i>子</i><i>电</i><i>流</i></div>
<div class="a" style="left:24px;top:251px;width:12.5px;height:8.5px;background:#fff;border-left:1.3px solid #555;border-top:1px solid #777"></div>
<div class="t m" style="left:28px;top:249.5px;font-family:'Liberation Serif',serif;font-size:8.5px">E</div>
<div class="t m" style="right:838.5px;top:249.5px">If(4520.00A)</div>
<div class="val" style="left:106.5px;top:241px">1793.45</div>
<div class="val" style="left:156.7px;top:241px">199.65</div>
<div class="val" style="left:206.9px;top:241px">1786.60</div>
<div class="row" style="top:266.5px"></div>
<div class="a" style="left:9px;top:267.5px;width:9.5px;height:9px;background:#808080;border:1px solid;border-color:#5a5a5a #e8e8e8 #e8e8e8 #5a5a5a"><svg class="a" style="left:0;top:0" width="7.5" height="7" viewBox="0 0 7.5 7"><path d="M1.2 3.2 L3 5.4 L6.4 1.2" stroke="#00f400" stroke-width="1.7" fill="none"/></svg></div>
<div class="a" style="left:7px;top:279px;width:12.5px;height:10px;background:#ff0000"></div>
<div class="t" style="left:24px;top:266px"><i>灭</i><i>磁</i><i>开</i><i>关</i></div>
<div class="t m" style="left:24px;top:278px">FMK</div>
<div class="val" style="left:206.9px;top:269.5px">ON</div>
<div class="a" style="left:1px;top:310.9px;width:269px;height:206.1px;background:#fff;border-left:1px solid #404040;border-top:1.1px solid #404040"></div>
<div class="a" style="left:0;top:517px;width:272.6px;height:0.8px;background:#e4e1da"></div>
<div class="a" style="left:0;top:517.8px;width:940px;height:1.2px;background:#fff"></div>
<div class="t" style="left:4px;top:316.5px"><i>灭</i><i>磁</i><i>时</i><i>间</i><i>常</i><i>数</i></div>
<div class="t" style="left:13.5px;top:333px"><i>定</i><i>子</i><i>电</i><i>压</i><span class="m">(Uab):&nbsp;2.05&nbsp;sec</span></div>
<div class="btn" style="left:8px;top:526px;width:45.5px;height:18px;line-height:15px;border-color:#000;box-shadow:inset 1px 1px 0 #fff,inset -1px -1px 0 #6a6a6a"><i>数</i><i>据</i><i>输</i><i>出</i></div>
<div class="btn" style="left:72.3px;top:526.7px;width:46px;height:16.5px;line-height:13.5px"><i>保</i><i>存</i><i>模</i><i>板</i></div>
<div class="a" style="left:0;top:550px;width:940px;height:1px;background:#e2e0da"></div>
<div class="t" style="left:1.5px;top:553px"><i>就</i><i>绪</i></div>
<div class="sunk" style="left:699.5px;top:553px;width:22.5px;height:14px;border-color:#8a8a86 #fff #fff #8a8a86"></div>
<div class="sunk" style="left:724px;top:553px;width:23px;height:14px;border-color:#8a8a86 #fff #fff #8a8a86"></div>
<div class="sunk" style="left:749px;top:553px;width:22.5px;height:14px;border-color:#8a8a86 #fff #fff #8a8a86"></div>
<div class="sunk" style="left:774px;top:553px;width:90px;height:14px;border-color:#8a8a86 #fff #fff #8a8a86"></div>
<div class="a" style="left:861px;top:553.6px;width:79px;height:13.4px;background:#f6f9fd;border-top:1px solid #9a9a98"></div>
<svg class="a" style="left:861px;top:553.6px" width="79" height="13.4" viewBox="861 553.6 79 13.4"><g transform="rotate(-12 869.5 561.5)"><rect x="863.4" y="555.4" width="12.2" height="12.2" rx="2.6" fill="#e8501a"/><path d="M872.8 558.6 Q869.6 557 867.6 558.6 Q866.2 560.4 869.6 561.4 Q873.2 562.6 871.6 564.4 Q869.6 566 866.4 564.4" stroke="#fff" stroke-width="1.9" fill="none"/></g><path d="M880.4 558.6 H889.8 V563.4 H880.4 Z M885.1 555.6 V567.4" stroke="#3c82d4" stroke-width="1.6" fill="none"/><path transform="translate(1.2 1.8)" d="M893.8 563.3 A6.3 6.3 0 1 0 901.4 554.4 A6.0 6.0 0 0 1 893.8 563.3 Z" fill="#4488d6"/><circle cx="914.6" cy="559.2" r="1.3" fill="none" stroke="#4488d6" stroke-width="0.9"/><path d="M918.6 562.6 Q919.4 564.6 917.6 566" stroke="#4488d6" stroke-width="1.3" fill="none"/><rect x="925" y="558" width="13" height="9.6" rx="1" fill="#4488d6"/><path d="M927 560.2 H936 M927 562.2 H936" stroke="#e8f0fb" stroke-width="1" stroke-dasharray="1.2 0.7"/><path d="M928 564.6 H935.4" stroke="#e8f0fb" stroke-width="1"/></svg>
<div class="a" style="left:274.2px;top:102.9px;width:665.8px;height:414.4px;background:#767676;border-left:1.8px solid #3c3c3c;border-top:1.3px solid #3c3c3c"></div>
<svg class="a" style="left:0;top:0" width="940" height="567" viewBox="0 0 940 567">
<path d="M387.62 112.50 V482.20" stroke="#101010" stroke-width="1" stroke-dasharray="0.8 0.8" fill="none"/>
<path d="M444.94 112.50 V482.20" stroke="#101010" stroke-width="1" stroke-dasharray="0.8 0.8" fill="none"/>
<path d="M502.26 112.50 V482.20" stroke="#101010" stroke-width="1" stroke-dasharray="0.8 0.8" fill="none"/>
<path d="M559.58 112.50 V482.20" stroke="#101010" stroke-width="1" stroke-dasharray="0.8 0.8" fill="none"/>
<path d="M616.90 112.50 V482.20" stroke="#101010" stroke-width="1" stroke-dasharray="0.8 0.8" fill="none"/>
<path d="M674.22 112.50 V482.20" stroke="#101010" stroke-width="1" stroke-dasharray="0.8 0.8" fill="none"/>
<path d="M731.54 112.50 V482.20" stroke="#101010" stroke-width="1" stroke-dasharray="0.8 0.8" fill="none"/>
<path d="M788.86 112.50 V482.20" stroke="#101010" stroke-width="1" stroke-dasharray="0.8 0.8" fill="none"/>
<path d="M846.18 112.50 V482.20" stroke="#101010" stroke-width="1" stroke-dasharray="0.8 0.8" fill="none"/>
<path d="M326.80 130.99 H903.50" stroke="#101010" stroke-width="1" stroke-dasharray="0.8 0.8" fill="none"/>
<path d="M326.80 149.47 H903.50" stroke="#101010" stroke-width="1" stroke-dasharray="0.8 0.8" fill="none"/>
<path d="M326.80 167.95 H903.50" stroke="#101010" stroke-width="1" stroke-dasharray="0.8 0.8" fill="none"/>
<path d="M326.80 186.44 H903.50" stroke="#101010" stroke-width="1" stroke-dasharray="0.8 0.8" fill="none"/>
<path d="M326.80 204.93 H903.50" stroke="#101010" stroke-width="1" stroke-dasharray="0.8 0.8" fill="none"/>
<path d="M326.80 223.41 H903.50" stroke="#101010" stroke-width="1" stroke-dasharray="0.8 0.8" fill="none"/>
<path d="M326.80 241.89 H903.50" stroke="#101010" stroke-width="1" stroke-dasharray="0.8 0.8" fill="none"/>
<path d="M326.80 260.38 H903.50" stroke="#101010" stroke-width="1" stroke-dasharray="0.8 0.8" fill="none"/>
<path d="M326.80 278.87 H903.50" stroke="#101010" stroke-width="1" stroke-dasharray="0.8 0.8" fill="none"/>
<path d="M326.80 297.35 H903.50" stroke="#101010" stroke-width="1" stroke-dasharray="0.8 0.8" fill="none"/>
<path d="M326.80 315.83 H903.50" stroke="#101010" stroke-width="1" stroke-dasharray="0.8 0.8" fill="none"/>
<path d="M326.80 334.32 H903.50" stroke="#101010" stroke-width="1" stroke-dasharray="0.8 0.8" fill="none"/>
<path d="M326.80 352.81 H903.50" stroke="#101010" stroke-width="1" stroke-dasharray="0.8 0.8" fill="none"/>
<path d="M326.80 371.29 H903.50" stroke="#101010" stroke-width="1" stroke-dasharray="0.8 0.8" fill="none"/>
<path d="M326.80 389.77 H903.50" stroke="#101010" stroke-width="1" stroke-dasharray="0.8 0.8" fill="none"/>
<path d="M326.80 408.26 H903.50" stroke="#101010" stroke-width="1" stroke-dasharray="0.8 0.8" fill="none"/>
<path d="M326.80 426.75 H903.50" stroke="#101010" stroke-width="1" stroke-dasharray="0.8 0.8" fill="none"/>
<path d="M326.80 445.23 H903.50" stroke="#101010" stroke-width="1" stroke-dasharray="0.8 0.8" fill="none"/>
<path d="M326.80 463.71 H903.50" stroke="#101010" stroke-width="1" stroke-dasharray="0.8 0.8" fill="none"/>
<path d="M326.30 112.50 H903.50" stroke="#1c1c1c" stroke-width="1.3" fill="none"/>
<path d="M330.30 112.50 V489.20" stroke="#303030" stroke-width="1.6" fill="none"/>
<path d="M904.20 112.50 V489.20" stroke="#3a3a3a" stroke-width="1.6" fill="none"/>
<path d="M326.80 482.20 H903.50" stroke="#2c2c2c" stroke-width="1" fill="none"/>
<path d="M330.30 482.20 V489.40" stroke="#1c1c1c" stroke-width="1.2"/>
<path d="M341.76 482.20 V485.40" stroke="#141414" stroke-width="1"/>
<path d="M353.23 482.20 V485.40" stroke="#141414" stroke-width="1"/>
<path d="M364.69 482.20 V485.40" stroke="#141414" stroke-width="1"/>
<path d="M376.16 482.20 V485.40" stroke="#141414" stroke-width="1"/>
<path d="M387.62 482.20 V489.40" stroke="#1c1c1c" stroke-width="1.2"/>
<path d="M399.08 482.20 V485.40" stroke="#141414" stroke-width="1"/>
<path d="M410.55 482.20 V485.40" stroke="#141414" stroke-width="1"/>
<path d="M422.01 482.20 V485.40" stroke="#141414" stroke-width="1"/>
<path d="M433.48 482.20 V485.40" stroke="#141414" stroke-width="1"/>
<path d="M444.94 482.20 V489.40" stroke="#1c1c1c" stroke-width="1.2"/>
<path d="M456.40 482.20 V485.40" stroke="#141414" stroke-width="1"/>
<path d="M467.87 482.20 V485.40" stroke="#141414" stroke-width="1"/>
<path d="M479.33 482.20 V485.40" stroke="#141414" stroke-width="1"/>
<path d="M490.80 482.20 V485.40" stroke="#141414" stroke-width="1"/>
<path d="M502.26 482.20 V489.40" stroke="#1c1c1c" stroke-width="1.2"/>
<path d="M513.72 482.20 V485.40" stroke="#141414" stroke-width="1"/>
<path d="M525.19 482.20 V485.40" stroke="#141414" stroke-width="1"/>
<path d="M536.65 482.20 V485.40" stroke="#141414" stroke-width="1"/>
<path d="M548.12 482.20 V485.40" stroke="#141414" stroke-width="1"/>
<path d="M559.58 482.20 V489.40" stroke="#1c1c1c" stroke-width="1.2"/>
<path d="M571.04 482.20 V485.40" stroke="#141414" stroke-width="1"/>
<path d="M582.51 482.20 V485.40" stroke="#141414" stroke-width="1"/>
<path d="M593.97 482.20 V485.40" stroke="#141414" stroke-width="1"/>
<path d="M605.44 482.20 V485.40" stroke="#141414" stroke-width="1"/>
<path d="M616.90 482.20 V489.40" stroke="#1c1c1c" stroke-width="1.2"/>
<path d="M628.36 482.20 V485.40" stroke="#141414" stroke-width="1"/>
<path d="M639.83 482.20 V485.40" stroke="#141414" stroke-width="1"/>
<path d="M651.29 482.20 V485.40" stroke="#141414" stroke-width="1"/>
<path d="M662.76 482.20 V485.40" stroke="#141414" stroke-width="1"/>
<path d="M674.22 482.20 V489.40" stroke="#1c1c1c" stroke-width="1.2"/>
<path d="M685.68 482.20 V485.40" stroke="#141414" stroke-width="1"/>
<path d="M697.15 482.20 V485.40" stroke="#141414" stroke-width="1"/>
<path d="M708.61 482.20 V485.40" stroke="#141414" stroke-width="1"/>
<path d="M720.08 482.20 V485.40" stroke="#141414" stroke-width="1"/>
<path d="M731.54 482.20 V489.40" stroke="#1c1c1c" stroke-width="1.2"/>
<path d="M743.00 482.20 V485.40" stroke="#141414" stroke-width="1"/>
<path d="M754.47 482.20 V485.40" stroke="#141414" stroke-width="1"/>
<path d="M765.93 482.20 V485.40" stroke="#141414" stroke-width="1"/>
<path d="M777.40 482.20 V485.40" stroke="#141414" stroke-width="1"/>
<path d="M788.86 482.20 V489.40" stroke="#1c1c1c" stroke-width="1.2"/>
<path d="M800.32 482.20 V485.40" stroke="#141414" stroke-width="1"/>
<path d="M811.79 482.20 V485.40" stroke="#141414" stroke-width="1"/>
<path d="M823.25 482.20 V485.40" stroke="#141414" stroke-width="1"/>
<path d="M834.72 482.20 V485.40" stroke="#141414" stroke-width="1"/>
<path d="M846.18 482.20 V489.40" stroke="#1c1c1c" stroke-width="1.2"/>
<path d="M857.64 482.20 V485.40" stroke="#141414" stroke-width="1"/>
<path d="M869.11 482.20 V485.40" stroke="#141414" stroke-width="1"/>
<path d="M880.57 482.20 V485.40" stroke="#141414" stroke-width="1"/>
<path d="M892.04 482.20 V485.40" stroke="#141414" stroke-width="1"/>
<path d="M903.50 482.20 V489.40" stroke="#1c1c1c" stroke-width="1.2"/>
<path d="M330.30 293.3 H903.50" stroke="#ff1010" stroke-width="1" stroke-dasharray="8.2 4.5 3 5.1" fill="none"/>
<path d="M330.30 326.3 H903.50" stroke="#1010ff" stroke-width="1" stroke-dasharray="8.2 4.5 3 5.1" fill="none"/>
<path d="M330.30 455.3 H903.50" stroke="#900808" stroke-width="1" stroke-dasharray="8.2 4.5 3 5.1" fill="none"/>
<path d="M331.1 146.6 L375.0 146.6 L375.0 146.6 L379.0 147.6 L383.0 148.6 L387.0 149.6 L391.0 150.6 L395.0 151.5 L399.0 152.5 L403.0 153.4 L407.0 154.4 L411.0 155.3 L415.0 156.3 L419.0 157.2 L423.0 158.1 L427.0 159.1 L431.0 160.0 L435.0 160.9 L439.0 161.8 L443.0 162.7 L447.0 163.6 L451.0 164.4 L455.0 165.3 L459.0 166.2 L463.0 167.1 L467.0 167.9 L471.0 168.8 L475.0 169.6 L479.0 170.5 L483.0 171.3 L487.0 172.1 L491.0 172.9 L495.0 173.8 L499.0 174.6 L503.0 175.4 L507.0 176.2 L511.0 177.0 L515.0 177.8 L519.0 178.6 L523.0 179.3 L527.0 180.1 L531.0 180.9 L535.0 181.7 L539.0 182.4 L543.0 183.2 L547.0 183.9 L551.0 184.7 L555.0 185.4 L559.0 186.1 L563.0 186.9 L567.0 187.6 L571.0 188.3 L575.0 189.0 L579.0 189.7 L583.0 190.4 L587.0 191.1 L591.0 191.8 L595.0 192.5 L599.0 193.2 L603.0 193.9 L607.0 194.6 L611.0 195.2 L615.0 195.9 L619.0 196.6 L623.0 197.2 L627.0 197.9 L631.0 198.5 L635.0 199.2 L639.0 199.8 L643.0 200.4 L647.0 201.1 L651.0 201.7 L655.0 202.3 L659.0 202.9 L663.0 203.6 L667.0 204.2 L671.0 204.8 L675.0 205.4 L679.0 206.0 L683.0 206.6 L687.0 207.2 L691.0 207.7 L695.0 208.3 L699.0 208.9 L703.0 209.5 L707.0 210.1 L711.0 210.6 L715.0 211.2 L719.0 211.7 L723.0 212.3 L727.0 212.8 L731.0 213.4 L735.0 213.9 L739.0 214.5 L743.0 215.0 L747.0 215.5 L751.0 216.1 L755.0 216.6 L759.0 217.1 L763.0 217.6 L767.0 218.2 L771.0 218.7 L775.0 219.2 L779.0 219.7 L783.0 220.2 L787.0 220.7 L791.0 221.2 L795.0 221.7 L799.0 222.1 L803.0 222.6 L807.0 223.1 L811.0 223.6 L815.0 224.1 L819.0 224.5 L823.0 225.0 L827.0 225.5 L831.0 225.9 L835.0 226.4 L839.0 226.8 L843.0 227.3 L847.0 227.7 L851.0 228.2 L855.0 228.6 L859.0 229.1 L863.0 229.5 L867.0 229.9 L871.0 230.4 L875.0 230.8 L879.0 231.2 L883.0 231.6 L887.0 232.1 L891.0 232.5 L895.0 232.9 L899.0 233.3 L903.0 233.7 L903.5 233.8" stroke="#ff1a10" stroke-width="1.15" fill="none"/>
<path d="M375.0 146.6 L375.0 146.6 L379.0 147.6 L383.0 148.6 L387.0 149.6 L391.0 150.6 L395.0 151.5 L399.0 152.5 L403.0 153.4 L407.0 154.4 L411.0 155.3 L415.0 156.3 L419.0 157.2 L423.0 158.1 L427.0 159.1 L431.0 160.0 L435.0 160.9 L439.0 161.8 L443.0 162.7 L447.0 163.6 L451.0 164.4 L455.0 165.3 L459.0 166.2 L463.0 167.1 L467.0 167.9 L471.0 168.8 L475.0 169.6 L479.0 170.5 L483.0 171.3 L487.0 172.1 L491.0 172.9 L495.0 173.8 L499.0 174.6 L503.0 175.4 L507.0 176.2 L511.0 177.0 L515.0 177.8 L519.0 178.6 L523.0 179.3 L527.0 180.1 L531.0 180.9 L535.0 181.7 L539.0 182.4 L543.0 183.2 L547.0 183.9 L551.0 184.7 L555.0 185.4 L559.0 186.1 L563.0 186.9 L567.0 187.6 L571.0 188.3 L575.0 189.0 L579.0 189.7 L583.0 190.4 L587.0 191.1 L591.0 191.8 L595.0 192.5 L599.0 193.2 L603.0 193.9 L607.0 194.6 L611.0 195.2 L615.0 195.9 L619.0 196.6 L623.0 197.2 L627.0 197.9 L631.0 198.5 L635.0 199.2 L639.0 199.8 L643.0 200.4 L647.0 201.1 L651.0 201.7 L655.0 202.3 L659.0 202.9 L663.0 203.6 L667.0 204.2 L671.0 204.8 L675.0 205.4 L679.0 206.0 L683.0 206.6 L687.0 207.2 L691.0 207.7 L695.0 208.3 L699.0 208.9 L703.0 209.5 L707.0 210.1 L711.0 210.6 L715.0 211.2 L719.0 211.7 L723.0 212.3 L727.0 212.8 L731.0 213.4 L735.0 213.9 L739.0 214.5 L743.0 215.0 L747.0 215.5 L751.0 216.1 L755.0 216.6 L759.0 217.1 L763.0 217.6 L767.0 218.2 L771.0 218.7 L775.0 219.2 L779.0 219.7 L783.0 220.2 L787.0 220.7 L791.0 221.2 L795.0 221.7 L799.0 222.1 L803.0 222.6 L807.0 223.1 L811.0 223.6 L815.0 224.1 L819.0 224.5 L823.0 225.0 L827.0 225.5 L831.0 225.9 L835.0 226.4 L839.0 226.8 L843.0 227.3 L847.0 227.7 L851.0 228.2 L855.0 228.6 L859.0 229.1 L863.0 229.5 L867.0 229.9 L871.0 230.4 L875.0 230.8 L879.0 231.2 L883.0 231.6 L887.0 232.1 L891.0 232.5 L895.0 232.9 L899.0 233.3 L903.0 233.7 L903.5 233.8" stroke="#d8d800" stroke-width="1" stroke-dasharray="1 17" opacity="0.85" fill="none" transform="translate(0,-0.6)"/>
<path d="M331.1 301.1 L332.8 301.1 L333.2 301.8 L338.2 301.8 L338.6 300.7 L352.2 300.7 L352.6 301.6 L360.0 301.6 L360.4 300.7 L368.4 300.7 L368.8 301.2 L372.3 301.2 L373.3 303.0 L373.5 330.0 L374.6 390.0 L375.8 434.0 L377.0 415.0 L378.0 395.0 L379.5 385.5 L382.0 383.0 L386.0 382.0 L444.4 378.4 L502.0 374.0 L558.7 369.8 L610.0 366.2 L674.0 361.7 L731.0 358.7 L788.0 356.2 L845.6 353.8 L903.5 352.0" stroke="#1414ff" stroke-width="1.05" fill="none" stroke-linejoin="round"/>
<path d="M331.1 338.4 L372.3 338.4 L373.5 341.0 L375.0 350.0 L376.5 357.0 L378.5 362.5 L381.0 366.8 L384.0 370.5 L387.7 373.2 L393.0 376.0 L400.0 378.6 L409.7 381.6 L425.0 385.8 L444.4 391.0 L470.0 395.6 L502.0 400.9 L530.0 405.5 L558.7 410.6 L585.0 414.8 L610.0 418.6 L640.0 422.6 L674.0 427.0 L700.0 429.2 L731.0 431.4 L760.0 433.4 L788.0 435.2 L815.0 437.0 L845.6 438.9 L875.0 440.4 L903.5 441.7" stroke="#8c0a0a" stroke-width="1.3" fill="none" stroke-linejoin="round"/>
<path d="M331.1 469.5 H417" stroke="#ff1010" stroke-width="1" fill="none"/>
<path d="M417.6 468.8 V482.6" stroke="#ff1010" stroke-width="2.2" fill="none"/>
<path d="M417.6 482.3 H903.5" stroke="#f01818" stroke-width="1.15" fill="none"/>
<path d="M355.4 112 V482.2" stroke="#fff" stroke-width="1.3"/>
<path d="M810.8 112 V482.2" stroke="#fff" stroke-width="1.3"/>
<rect x="351.6" y="104.6" width="7.8" height="8" fill="#e4e4e4" stroke="#bbb" stroke-width="0.6"/>
<text x="355.5" y="111.3" font-size="7" text-anchor="middle" fill="#222" font-family="Liberation Sans">1</text>
<rect x="807.4" y="111.5" width="6.6" height="1.3" fill="#f0f0f0"/>
<text x="810.7" y="110.6" font-size="6" text-anchor="middle" fill="#969696" font-family="Liberation Sans">2</text>
<path d="M321.8 287.1 L330 293.3 L321.8 299.5 Z" fill="none" stroke="#ff1010" stroke-width="1"/><path d="M321.6 286.9 V299.7" stroke="#ff1010" stroke-width="1.5"/>
<path d="M321.8 320.1 L330 326.3 L321.8 332.5 Z" fill="none" stroke="#1010ff" stroke-width="1"/><path d="M321.6 319.9 V332.7" stroke="#1010ff" stroke-width="1.5"/>
<path d="M321.8 449.3 L330 455.5 L321.8 461.7 Z" fill="none" stroke="#900808" stroke-width="1"/><path d="M321.6 449.1 V461.9" stroke="#900808" stroke-width="1.5"/>
</svg>
<div class="btn b" style="left:285px;top:283.8px;width:35.5px;height:17.5px;line-height:15px;text-align:right;padding-right:2px;color:#ff1010;font-size:10.5px;background:#c8c8c8;border-color:#fff #5a5a5a #5a5a5a #fff;box-shadow:inset -1px -1px 0 #9a9a9a,inset 1px 1px 0 #eee">Uca</div>
<div class="btn b" style="left:285px;top:317.3px;width:35.5px;height:17.5px;line-height:15px;text-align:right;padding-right:2px;color:#1010ff;font-size:10.5px;background:#c8c8c8;border-color:#fff #5a5a5a #5a5a5a #fff;box-shadow:inset -1px -1px 0 #9a9a9a,inset 1px 1px 0 #eee">Uf</div>
<div class="btn b" style="left:285px;top:446.2px;width:35.5px;height:17.5px;line-height:15px;text-align:right;padding-right:2px;color:#900808;font-size:10.5px;background:#c8c8c8;border-color:#fff #5a5a5a #5a5a5a #fff;box-shadow:inset -1px -1px 0 #9a9a9a,inset 1px 1px 0 #eee">If</div>
<div class="t b" style="left:905.5px;top:281.2px;color:#ff1010;font-size:10.5px">2.75</div>
<div class="t b" style="left:905.5px;top:293px;color:#ff1010;font-size:10.5px">0.00</div>
<div class="t b" style="left:905.5px;top:314.2px;color:#1010ff;font-size:10.5px">103</div>
<div class="t b" style="left:905.5px;top:326.3px;color:#1010ff;font-size:10.5px">0</div>
<div class="t b" style="left:905.5px;top:442.7px;color:#900808;font-size:10.5px">282.50</div>
<div class="t b" style="left:905.5px;top:456px;color:#900808;font-size:10.5px">0.00</div>
<svg class="a" style="left:0;top:0" width="940" height="567" viewBox="0 0 940 567"><path d="M913.8 474.4 L906.2 482.3 H914.2" fill="none" stroke="#ff1010" stroke-width="1.1"/></svg>
<div class="t b" style="left:916px;top:472px;color:#ff1010;font-size:10.5px">FMK</div>
<div class="t b" style="left:316.3px;top:491px;font-size:10.8px">46.69</div>
<div class="t b" style="left:581.8px;top:491px;font-size:10.8px">200.00ms / <i>格</i></div>
<div class="t b" style="left:889.6px;top:491px;font-size:10.8px">48.69</div>
<div class="t b" style="left:928.6px;top:491px;font-size:10.5px"><i>秒</i></div>
<div class="a" style="left:276px;top:504.8px;width:664px;height:12.4px;background:#eae8e3"></div>
<div class="btn" style="left:276px;top:504.8px;width:12px;height:12.4px"></div>
<div class="btn" style="left:929.5px;top:504.8px;width:12px;height:12.4px"></div>
<svg class="a" style="left:276px;top:504.5px" width="664" height="13" viewBox="0 0 664 13"><path d="M4 6.3 L7.2 3.4 V9.2 Z" fill="#000"/><path d="M661 6.3 L657.8 3.4 V9.2 Z" fill="#000"/></svg>
<div class="btn" style="left:787.5px;top:504.8px;width:20.5px;height:12.4px"></div>
</div>
</body></html>
